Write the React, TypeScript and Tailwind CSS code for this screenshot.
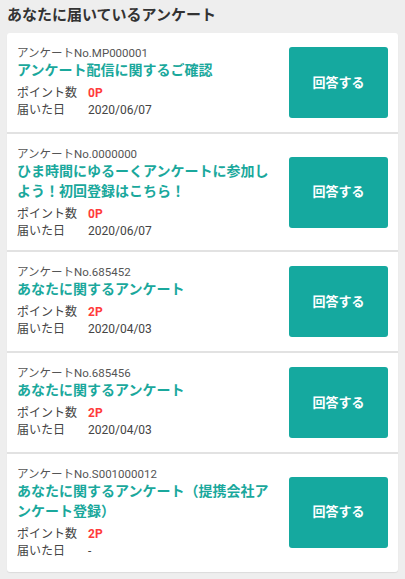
const surveys = [
  { no: "MP000001", title: "アンケート配信に関するご確認", points: "0P", date: "2020/06/07" },
  { no: "0000000", title: "ひま時間にゆるーくアンケートに参加しよう！初回登録はこちら！", points: "0P", date: "2020/06/07" },
  { no: "685452", title: "あなたに関するアンケート", points: "2P", date: "2020/04/03" },
  { no: "685456", title: "あなたに関するアンケート", points: "2P", date: "2020/04/03" },
  { no: "S001000012", title: "あなたに関するアンケート（提携会社アンケート登録）", points: "2P", date: "-" },
];

export default function App() {
  return (
    <div className="min-h-[579px] bg-[#eeeeee] px-[7px] pt-[4px] pb-[6px] font-['Roboto','Noto_Sans_CJK_JP',sans-serif]">
      <h1 className="text-[15px] leading-[22px] font-bold text-[#333333] mb-[7px]">あなたに届いているアンケート</h1>
      <div className="bg-white rounded-[3px] shadow-[0_1px_1px_rgba(0,0,0,0.08)]">
        {surveys.map((s, i) => (
          <div
            key={s.no}
            className={`flex items-center px-[10px] ${i < surveys.length - 1 ? "border-b-2 border-[#e2e2e2]" : "pb-[2px]"}`}
          >
            <div className="flex-1 min-w-0 self-start pt-[14px] pb-[10px] pr-[10px]">
              <p className="text-[11.5px] leading-[13px] text-[#555555]">アンケートNo.{s.no}</p>
              <p className="text-[14px] leading-[20px] font-bold text-[#1aa89c]">{s.title}</p>
              <div className="mt-[5px] text-[12px] leading-[17px] text-[#444444]">
                <div className="flex">
                  <span className="w-[71px]">ポイント数</span>
                  <span className="font-bold text-[#ff3b3b]">{s.points}</span>
                </div>
                <div className="flex">
                  <span className="w-[71px]">届いた日</span>
                  <span>{s.date}</span>
                </div>
              </div>
            </div>
            <button className="my-[14px] w-[99px] h-[71px] shrink-0 rounded-[3px] bg-[#15a99f] text-white text-[13px] font-bold">
              回答する
            </button>
          </div>
        ))}
      </div>
    </div>
  );
}
